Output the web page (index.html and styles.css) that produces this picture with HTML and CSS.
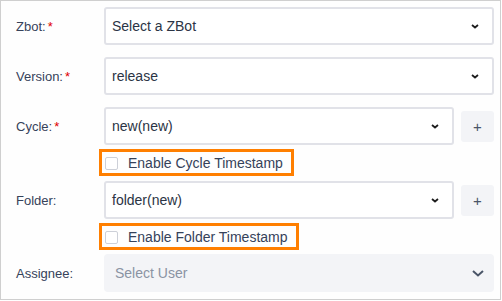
FILE: index.html
```html
<!DOCTYPE html>
<html lang="en">
<head>
    <meta charset="UTF-8">
    <meta name="viewport" content="width=device-width, initial-scale=1.0">
    <title>Test Settings</title>
    <link rel="stylesheet" href="styles.css">
</head>
<body>
    <div class="panel">
        <div class="row">
            <label class="label">Zbot:<span class="req">*</span></label>
            <div class="select">
                <span>Select a ZBot</span>
                <svg class="caret" width="8" height="5" viewBox="0 0 8 5"><path d="M1 1l3 2.5L7 1" fill="none" stroke="#1c1c1c" stroke-width="1.8"/></svg>
            </div>
        </div>

        <div class="row">
            <label class="label">Version:<span class="req">*</span></label>
            <div class="select">
                <span>release</span>
                <svg class="caret" width="8" height="5" viewBox="0 0 8 5"><path d="M1 1l3 2.5L7 1" fill="none" stroke="#1c1c1c" stroke-width="1.8"/></svg>
            </div>
        </div>

        <div class="row tight">
            <label class="label">Cycle:<span class="req">*</span></label>
            <div class="field-with-btn">
                <div class="select">
                    <span>new(new)</span>
                    <svg class="caret" width="8" height="5" viewBox="0 0 8 5"><path d="M1 1l3 2.5L7 1" fill="none" stroke="#1c1c1c" stroke-width="1.8"/></svg>
                </div>
                <button class="add-btn">+</button>
            </div>
        </div>
        <div class="check-row">
            <label class="highlight">
                <span class="checkbox"></span>
                Enable Cycle Timestamp
            </label>
        </div>

        <div class="row tight">
            <label class="label">Folder:</label>
            <div class="field-with-btn">
                <div class="select">
                    <span>folder(new)</span>
                    <svg class="caret" width="8" height="5" viewBox="0 0 8 5"><path d="M1 1l3 2.5L7 1" fill="none" stroke="#1c1c1c" stroke-width="1.8"/></svg>
                </div>
                <button class="add-btn">+</button>
            </div>
        </div>
        <div class="check-row last">
            <label class="highlight">
                <span class="checkbox"></span>
                Enable Folder Timestamp
            </label>
        </div>

        <div class="row">
            <label class="label">Assignee:</label>
            <div class="select disabled">
                <span>Select User</span>
                <svg width="12" height="7" viewBox="0 0 12 7"><path d="M1 1l5 4.5L11 1" fill="none" stroke="#4a5568" stroke-width="2"/></svg>
            </div>
        </div>
    </div>
</body>
</html>
```

FILE: styles.css
```css
body {
    margin: 0;
    background-color: #fff;
    font-family: "Liberation Sans", Arial, sans-serif;
}

.panel {
    width: 501px;
    height: 300px;
    box-sizing: border-box;
    border: 1px solid #cfcfcf;
    padding: 6px 6px 0 15px;
    background-color: #fefefe;
}

.row {
    display: grid;
    grid-template-columns: 88px 1fr;
    align-items: center;
    margin-bottom: 12px;
}

.row.tight {
    margin-bottom: 4px;
}

.label {
    font-size: 13px;
    color: #36425a;
}

.req {
    color: #e00000;
    margin-left: 2px;
}

.select {
    flex: 1;
    height: 38px;
    box-sizing: border-box;
    border: 2px solid #e1e2e8;
    border-radius: 3px;
    background-color: #fff;
    padding: 0 13px 0 6px;
    display: flex;
    align-items: center;
    justify-content: space-between;
    font-size: 14px;
    color: #2b3445;
}

.select.disabled {
    border: none;
    border-radius: 4px;
    background-color: #f3f4f7;
    padding: 0 10px 0 11px;
    color: #8a93a3;
}

.field-with-btn {
    display: flex;
    align-items: center;
    gap: 7px;
}

.add-btn {
    width: 33px;
    height: 31px;
    border: none;
    border-radius: 3px;
    background-color: #f3f4f7;
    color: #4a5568;
    font-family: "Liberation Sans", Arial, sans-serif;
    font-size: 15px;
    padding: 0;
    cursor: pointer;
}

.check-row {
    padding-left: 83px;
    margin-bottom: 5px;
}

.check-row.last {
    margin-bottom: 4px;
}

.highlight {
    display: inline-flex;
    align-items: center;
    height: 27px;
    box-sizing: border-box;
    border: 3px solid #ff7f00;
    padding: 0 8px 0 3px;
    font-size: 14px;
    color: #35425a;
}

.checkbox {
    width: 13px;
    height: 13px;
    box-sizing: border-box;
    border: 1px solid #cdd0d8;
    border-radius: 2px;
    background-color: #fff;
    margin-right: 10px;
    margin-top: 1px;
}
```
